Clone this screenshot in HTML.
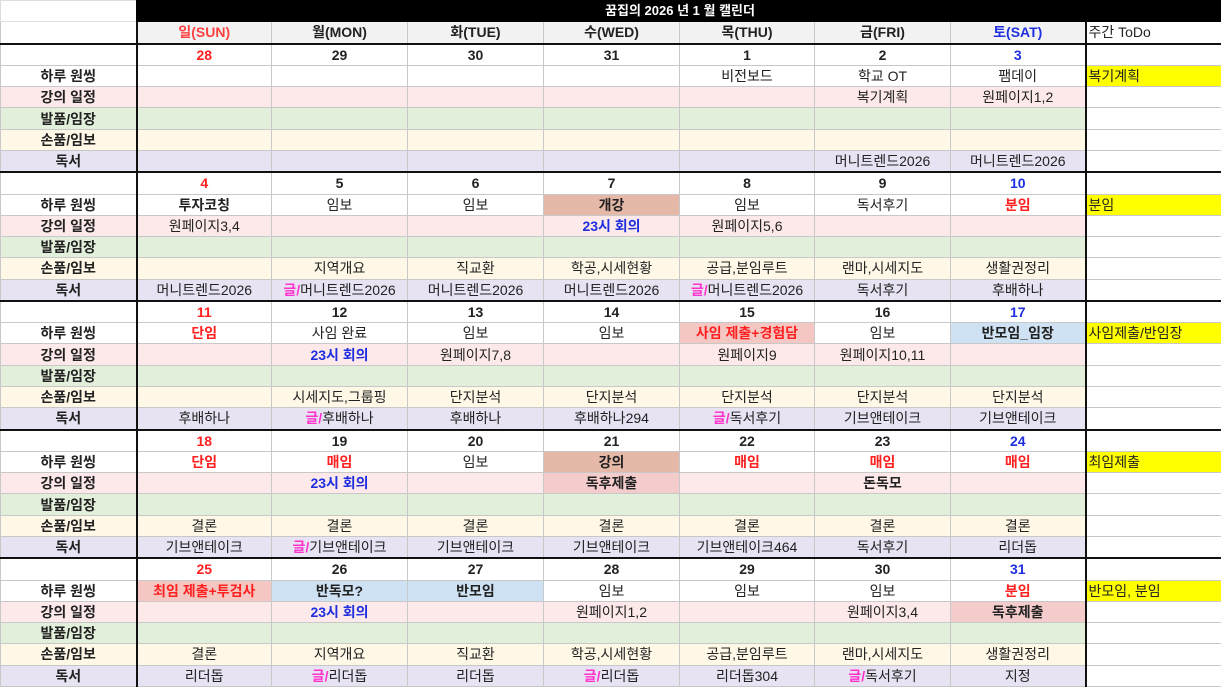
<!DOCTYPE html>
<html><head><meta charset="utf-8"><style>
body{margin:0;background:#fff;overflow:hidden}
table{border-collapse:collapse;table-layout:fixed;width:1221px;height:687px;font-family:"Liberation Sans","Noto Sans CJK KR",sans-serif;font-size:14px;color:#222;}
td{border:1px solid #c8c8c8;padding:0;height:17px;text-align:center;white-space:nowrap;overflow:hidden;line-height:16px;}
td:first-child{border-right:2px solid #111;font-weight:bold;}
td:nth-child(8){border-right:2px solid #111;}
tr.d td{border-top:2px solid #111;font-weight:bold;}
tr.p td{background:#fde9e9}
tr.g td{background:#e2efda}
tr.y td{background:#fff8e7}
tr.l td{background:#e7e3f3}
tr td:first-child,tr td:last-child{background:#fff}
tr.p td:first-child{background:#fde9e9}
tr.g td:first-child{background:#e2efda}
tr.y td:first-child{background:#fff8e7}
tr.l td:first-child{background:#e7e3f3}
td:last-child{text-align:left;padding-left:2px;font-weight:normal!important}
.r{color:#ff2020;font-weight:bold}
.b{color:#1f2fe0;font-weight:bold}
.k{font-weight:bold}
.m{color:#ff33cc;font-weight:bold}
td.br{background:#e6b8a7!important;font-weight:bold}
td.pr{background:#f4c7c3!important}
td.pk{background:#f4cccc!important;font-weight:bold}
td.bl{background:#cfe2f3!important;font-weight:bold}
td.ye{background:#ffff00!important}
td.tt{background:#000!important;color:#fff;font-weight:bold!important;border-color:#000;text-align:center!important;font-size:13px}
.h td{background:#f2f2f2;font-weight:bold}
</style></head><body>
<table>
<colgroup><col style="width:136px"><col style="width:135px"><col style="width:136px"><col style="width:136px"><col style="width:136px"><col style="width:135px"><col style="width:136px"><col style="width:135px"><col style="width:136px"></colgroup>
<tr class="t"><td style="background:#fff;border-color:#ddd;border-right:1px solid #000"></td><td colspan="8" class="tt">꿈집의 2026 년 1 월 캘린더</td></tr>
<tr class="h"><td style="background:#fff"></td><td class="r" style="color:#ff4040">일(SUN)</td><td>월(MON)</td><td>화(TUE)</td><td>수(WED)</td><td>목(THU)</td><td>금(FRI)</td><td style="color:#2030e0">토(SAT)</td><td style="background:#fff">주간 ToDo</td></tr>
<tr class="d"><td></td><td class="r">28</td><td>29</td><td>30</td><td>31</td><td>1</td><td>2</td><td class="b">3</td><td></td></tr>
<tr><td>하루 원씽</td><td></td><td></td><td></td><td></td><td>비전보드</td><td>학교 OT</td><td>팸데이</td><td class="ye">복기계획</td></tr>
<tr class="p"><td>강의 일정</td><td></td><td></td><td></td><td></td><td></td><td>복기계획</td><td>원페이지1,2</td><td></td></tr>
<tr class="g"><td>발품/임장</td><td></td><td></td><td></td><td></td><td></td><td></td><td></td><td></td></tr>
<tr class="y"><td>손품/임보</td><td></td><td></td><td></td><td></td><td></td><td></td><td></td><td></td></tr>
<tr class="l"><td>독서</td><td></td><td></td><td></td><td></td><td></td><td>머니트렌드2026</td><td>머니트렌드2026</td><td></td></tr>

<tr class="d"><td></td><td class="r">4</td><td>5</td><td>6</td><td>7</td><td>8</td><td>9</td><td class="b">10</td><td></td></tr>
<tr><td>하루 원씽</td><td class="k">투자코칭</td><td>임보</td><td>임보</td><td class="br">개강</td><td>임보</td><td>독서후기</td><td class="r">분임</td><td class="ye">분임</td></tr>
<tr class="p"><td>강의 일정</td><td>원페이지3,4</td><td></td><td></td><td class="b">23시 회의</td><td>원페이지5,6</td><td></td><td></td><td></td></tr>
<tr class="g"><td>발품/임장</td><td></td><td></td><td></td><td></td><td></td><td></td><td></td><td></td></tr>
<tr class="y"><td>손품/임보</td><td></td><td>지역개요</td><td>직교환</td><td>학공,시세현황</td><td>공급,분임루트</td><td>랜마,시세지도</td><td>생활권정리</td><td></td></tr>
<tr class="l"><td>독서</td><td>머니트렌드2026</td><td><span class="m">글/</span>머니트렌드2026</td><td>머니트렌드2026</td><td>머니트렌드2026</td><td><span class="m">글/</span>머니트렌드2026</td><td>독서후기</td><td>후배하나</td><td></td></tr>

<tr class="d"><td></td><td class="r">11</td><td>12</td><td>13</td><td>14</td><td>15</td><td>16</td><td class="b">17</td><td></td></tr>
<tr><td>하루 원씽</td><td class="r">단임</td><td>사임 완료</td><td>임보</td><td>임보</td><td class="r pr">사임 제출+경험담</td><td>임보</td><td class="bl">반모임_임장</td><td class="ye">사임제출/반임장</td></tr>
<tr class="p"><td>강의 일정</td><td></td><td class="b">23시 회의</td><td>원페이지7,8</td><td></td><td>원페이지9</td><td>원페이지10,11</td><td></td><td></td></tr>
<tr class="g"><td>발품/임장</td><td></td><td></td><td></td><td></td><td></td><td></td><td></td><td></td></tr>
<tr class="y"><td>손품/임보</td><td></td><td>시세지도,그룹핑</td><td>단지분석</td><td>단지분석</td><td>단지분석</td><td>단지분석</td><td>단지분석</td><td></td></tr>
<tr class="l"><td>독서</td><td>후배하나</td><td><span class="m">글/</span>후배하나</td><td>후배하나</td><td>후배하나294</td><td><span class="m">글/</span>독서후기</td><td>기브앤테이크</td><td>기브앤테이크</td><td></td></tr>

<tr class="d"><td></td><td class="r">18</td><td>19</td><td>20</td><td>21</td><td>22</td><td>23</td><td class="b">24</td><td></td></tr>
<tr><td>하루 원씽</td><td class="r">단임</td><td class="r">매임</td><td>임보</td><td class="br">강의</td><td class="r">매임</td><td class="r">매임</td><td class="r">매임</td><td class="ye">최임제출</td></tr>
<tr class="p"><td>강의 일정</td><td></td><td class="b">23시 회의</td><td></td><td class="pk">독후제출</td><td></td><td class="k">돈독모</td><td></td><td></td></tr>
<tr class="g"><td>발품/임장</td><td></td><td></td><td></td><td></td><td></td><td></td><td></td><td></td></tr>
<tr class="y"><td>손품/임보</td><td>결론</td><td>결론</td><td>결론</td><td>결론</td><td>결론</td><td>결론</td><td>결론</td><td></td></tr>
<tr class="l"><td>독서</td><td>기브앤테이크</td><td><span class="m">글/</span>기브앤테이크</td><td>기브앤테이크</td><td>기브앤테이크</td><td>기브앤테이크464</td><td>독서후기</td><td>리더돕</td><td></td></tr>

<tr class="d"><td></td><td class="r">25</td><td>26</td><td>27</td><td>28</td><td>29</td><td>30</td><td class="b">31</td><td></td></tr>
<tr><td>하루 원씽</td><td class="r pr">최임 제출+투검사</td><td class="bl">반독모?</td><td class="bl">반모임</td><td>임보</td><td>임보</td><td>임보</td><td class="r">분임</td><td class="ye">반모임, 분임</td></tr>
<tr class="p"><td>강의 일정</td><td></td><td class="b">23시 회의</td><td></td><td>원페이지1,2</td><td></td><td>원페이지3,4</td><td class="pk">독후제출</td><td></td></tr>
<tr class="g"><td>발품/임장</td><td></td><td></td><td></td><td></td><td></td><td></td><td></td><td></td></tr>
<tr class="y"><td>손품/임보</td><td>결론</td><td>지역개요</td><td>직교환</td><td>학공,시세현황</td><td>공급,분임루트</td><td>랜마,시세지도</td><td>생활권정리</td><td></td></tr>
<tr class="l"><td>독서</td><td>리더돕</td><td><span class="m">글/</span>리더돕</td><td>리더돕</td><td><span class="m">글/</span>리더돕</td><td>리더돕304</td><td><span class="m">글/</span>독서후기</td><td>지정</td><td></td></tr>
</table>
</body></html>
